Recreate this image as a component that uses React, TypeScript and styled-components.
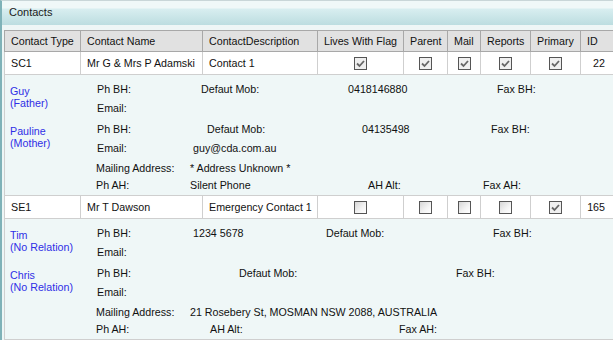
import React from 'react';
import styled, { createGlobalStyle } from 'styled-components';

const GlobalStyle = createGlobalStyle`
  html, body {
    margin: 0;
    padding: 0;
    overflow: hidden;
    background: #eef6f6;
  }
  body {
    font-family: "Liberation Sans", Arial, sans-serif;
    font-size: 10.7px;
    color: #111;
  }
`;

const Panel = styled.div`
  width: 640px;
  height: 340px;
  box-sizing: border-box;
  border-left: 2px solid #7fb2b8;
  border-top: 1px solid #c9d6d8;
  background: #eef6f6;
  overflow: hidden;
`;

const TitleBar = styled.div`
  height: 24px;
  box-sizing: border-box;
  padding: 5px 0 0 7px;
  line-height: 13px;
  font-size: 11px;
  color: #1a1a1a;
  background: linear-gradient(to bottom, #f0f8f8 0, #f0f8f8 7px, #d8eef0 8px, #bcdde0 24px);
`;

const TableWrap = styled.div`
  padding: 5px 0 0 2px;
`;

const Table = styled.table`
  border-collapse: collapse;
  table-layout: fixed;
  width: 616px;
`;

const Th = styled.th`
  height: 20px;
  padding: 0 6px;
  text-align: left;
  font-weight: normal;
  white-space: nowrap;
  background: #e1e1e1;
  border: 1px solid #a8a8a8;
`;

const Td = styled.td<{ $align?: 'left' | 'center' | 'right'; $padRight?: number }>`
  height: 22px;
  padding: 0 ${({ $padRight }) => $padRight ?? 6}px 0 6px;
  text-align: ${({ $align }) => $align || 'left'};
  white-space: nowrap;
  background: #fff;
  border: 1px solid #cfcfcf;
`;

const DetailCell = styled.td`
  padding: 4px 0 2px 5px;
  background: #eff7f7;
  border: 1px solid #cfcfcf;
  border-right: none;
`;

const Group = styled.div`
  display: flex;
  flex-direction: column;
  gap: 2px;
`;

const PersonRow = styled.div`
  display: grid;
  grid-template-columns: 87px 1fr;
`;

const PersonName = styled.div`
  padding-top: 6px;
  line-height: 12px;
  color: #2f2fe6;
  white-space: nowrap;
`;

const InfoGrid = styled.div<{ $cols: string; $rowHeight: number; $shift?: number }>`
  display: grid;
  grid-template-columns: ${({ $cols }) => $cols};
  grid-auto-rows: ${({ $rowHeight }) => $rowHeight}px;
  align-items: center;
  margin-left: ${({ $shift }) => $shift || 0}px;
`;

const InfoCell = styled.div<{ $span?: number }>`
  white-space: nowrap;
  grid-column: ${({ $span }) => ($span ? `span ${$span}` : 'auto')};
`;

const Box = styled.span<{ $checked: boolean }>`
  display: inline-flex;
  align-items: center;
  justify-content: center;
  width: 13px;
  height: 13px;
  box-sizing: border-box;
  border: 1px solid #555;
  vertical-align: middle;
  background: ${({ $checked }) =>
    $checked ? '#efefef' : 'linear-gradient(135deg, #d6d6d6 0%, #f4f4f4 60%, #fff 100%)'};
`;

const CheckBox: React.FC<{ checked: boolean }> = ({ checked }) => (
  <Box $checked={checked}>
    {checked && (
      <svg width="11" height="11" viewBox="0 0 11 11">
        <path d="M2 5.5 L4.5 8 L9 3" fill="none" stroke="#666" strokeWidth="1.8" />
      </svg>
    )}
  </Box>
);

interface Cell {
  text?: string;
  span?: number;
}

interface Person {
  name: string;
  relation: string;
  cols: string;
  rows: Cell[][];
}

interface Contact {
  type: string;
  name: string;
  description: string;
  flags: boolean[];
  id: number;
  people: Person[];
  addressCols: string;
  address: Cell[][];
}

const contacts: Contact[] = [
  {
    type: 'SC1',
    name: 'Mr G & Mrs P Adamski',
    description: 'Contact 1',
    flags: [true, true, true, true, true],
    id: 22,
    people: [
      {
        name: 'Guy',
        relation: '(Father)',
        cols: '96px 8px 147px 149px auto',
        rows: [
          [{ text: 'Ph BH:' }, {}, { text: 'Defaut Mob:' }, { text: '0418146880' }, { text: 'Fax BH:' }],
          [{ text: 'Email:' }, { span: 4 }],
        ],
      },
      {
        name: 'Pauline',
        relation: '(Mother)',
        cols: '96px 14px 155px 129px auto',
        rows: [
          [{ text: 'Ph BH:' }, {}, { text: 'Defaut Mob:' }, { text: '04135498' }, { text: 'Fax BH:' }],
          [{ text: 'Email:' }, { text: 'guy@cda.com.au', span: 4 }],
        ],
      },
    ],
    addressCols: '94px 178px 115px auto',
    address: [
      [{ text: 'Mailing Address:' }, { text: '* Address Unknown *', span: 3 }],
      [{ text: 'Ph AH:' }, { text: 'Silent Phone' }, { text: 'AH Alt:' }, { text: 'Fax AH:' }],
    ],
  },
  {
    type: 'SE1',
    name: 'Mr T Dawson',
    description: 'Emergency Contact 1',
    flags: [false, false, false, false, true],
    id: 165,
    people: [
      {
        name: 'Tim',
        relation: '(No Relation)',
        cols: '96px 133px 100px 67px auto',
        rows: [
          [{ text: 'Ph BH:' }, { text: '1234 5678' }, { text: 'Defaut Mob:' }, {}, { text: 'Fax BH:' }],
          [{ text: 'Email:' }, { span: 4 }],
        ],
      },
      {
        name: 'Chris',
        relation: '(No Relation)',
        cols: '96px 46px 110px 107px auto',
        rows: [
          [{ text: 'Ph BH:' }, {}, { text: 'Defaut Mob:' }, {}, { text: 'Fax BH:' }],
          [{ text: 'Email:' }, { span: 4 }],
        ],
      },
    ],
    addressCols: '94px 20px 189px auto',
    address: [
      [{ text: 'Mailing Address:' }, { text: '21 Rosebery St, MOSMAN NSW 2088, AUSTRALIA', span: 3 }],
      [{ text: 'Ph AH:' }, {}, { text: 'AH Alt:' }, { text: 'Fax AH:' }],
    ],
  },
];

const columns = [
  { label: 'Contact Type', width: 76 },
  { label: 'Contact Name', width: 122 },
  { label: 'ContactDescription', width: 115 },
  { label: 'Lives With Flag', width: 86 },
  { label: 'Parent', width: 44 },
  { label: 'Mail', width: 33 },
  { label: 'Reports', width: 50 },
  { label: 'Primary', width: 50 },
  { label: 'ID', width: 40 },
];

const renderCells = (rows: Cell[][]) =>
  rows.map((row, r) =>
    row.map((cell, c) => (
      <InfoCell key={`${r}-${c}`} $span={cell.span}>
        {cell.text}
      </InfoCell>
    ))
  );

const App: React.FC = () => {
  return (
    <>
      <GlobalStyle />
      <Panel>
        <TitleBar>Contacts</TitleBar>
        <TableWrap>
          <Table>
            <colgroup>
              {columns.map((col) => (
                <col key={col.label} style={{ width: col.width }} />
              ))}
            </colgroup>
            <thead>
              <tr>
                {columns.map((col) => (
                  <Th key={col.label}>{col.label}</Th>
                ))}
              </tr>
            </thead>
            <tbody>
              {contacts.map((contact) => (
                <React.Fragment key={contact.type}>
                  <tr>
                    <Td>{contact.type}</Td>
                    <Td>{contact.name}</Td>
                    <Td>{contact.description}</Td>
                    {contact.flags.map((flag, i) => (
                      <Td key={i} $align="center">
                        <CheckBox checked={flag} />
                      </Td>
                    ))}
                    <Td $align="right" $padRight={15}>
                      {contact.id}
                    </Td>
                  </tr>
                  <tr>
                    <DetailCell colSpan={columns.length}>
                      <Group>
                        {contact.people.map((person) => (
                          <PersonRow key={person.name}>
                            <PersonName>
                              {person.name}
                              <br />
                              {person.relation}
                            </PersonName>
                            <InfoGrid $cols={person.cols} $rowHeight={19}>
                              {renderCells(person.rows)}
                            </InfoGrid>
                          </PersonRow>
                        ))}
                        <PersonRow>
                          <div />
                          <InfoGrid $cols={contact.addressCols} $rowHeight={17} $shift={-1}>
                            {renderCells(contact.address)}
                          </InfoGrid>
                        </PersonRow>
                      </Group>
                    </DetailCell>
                  </tr>
                </React.Fragment>
              ))}
            </tbody>
          </Table>
        </TableWrap>
      </Panel>
    </>
  );
};

export default App;
